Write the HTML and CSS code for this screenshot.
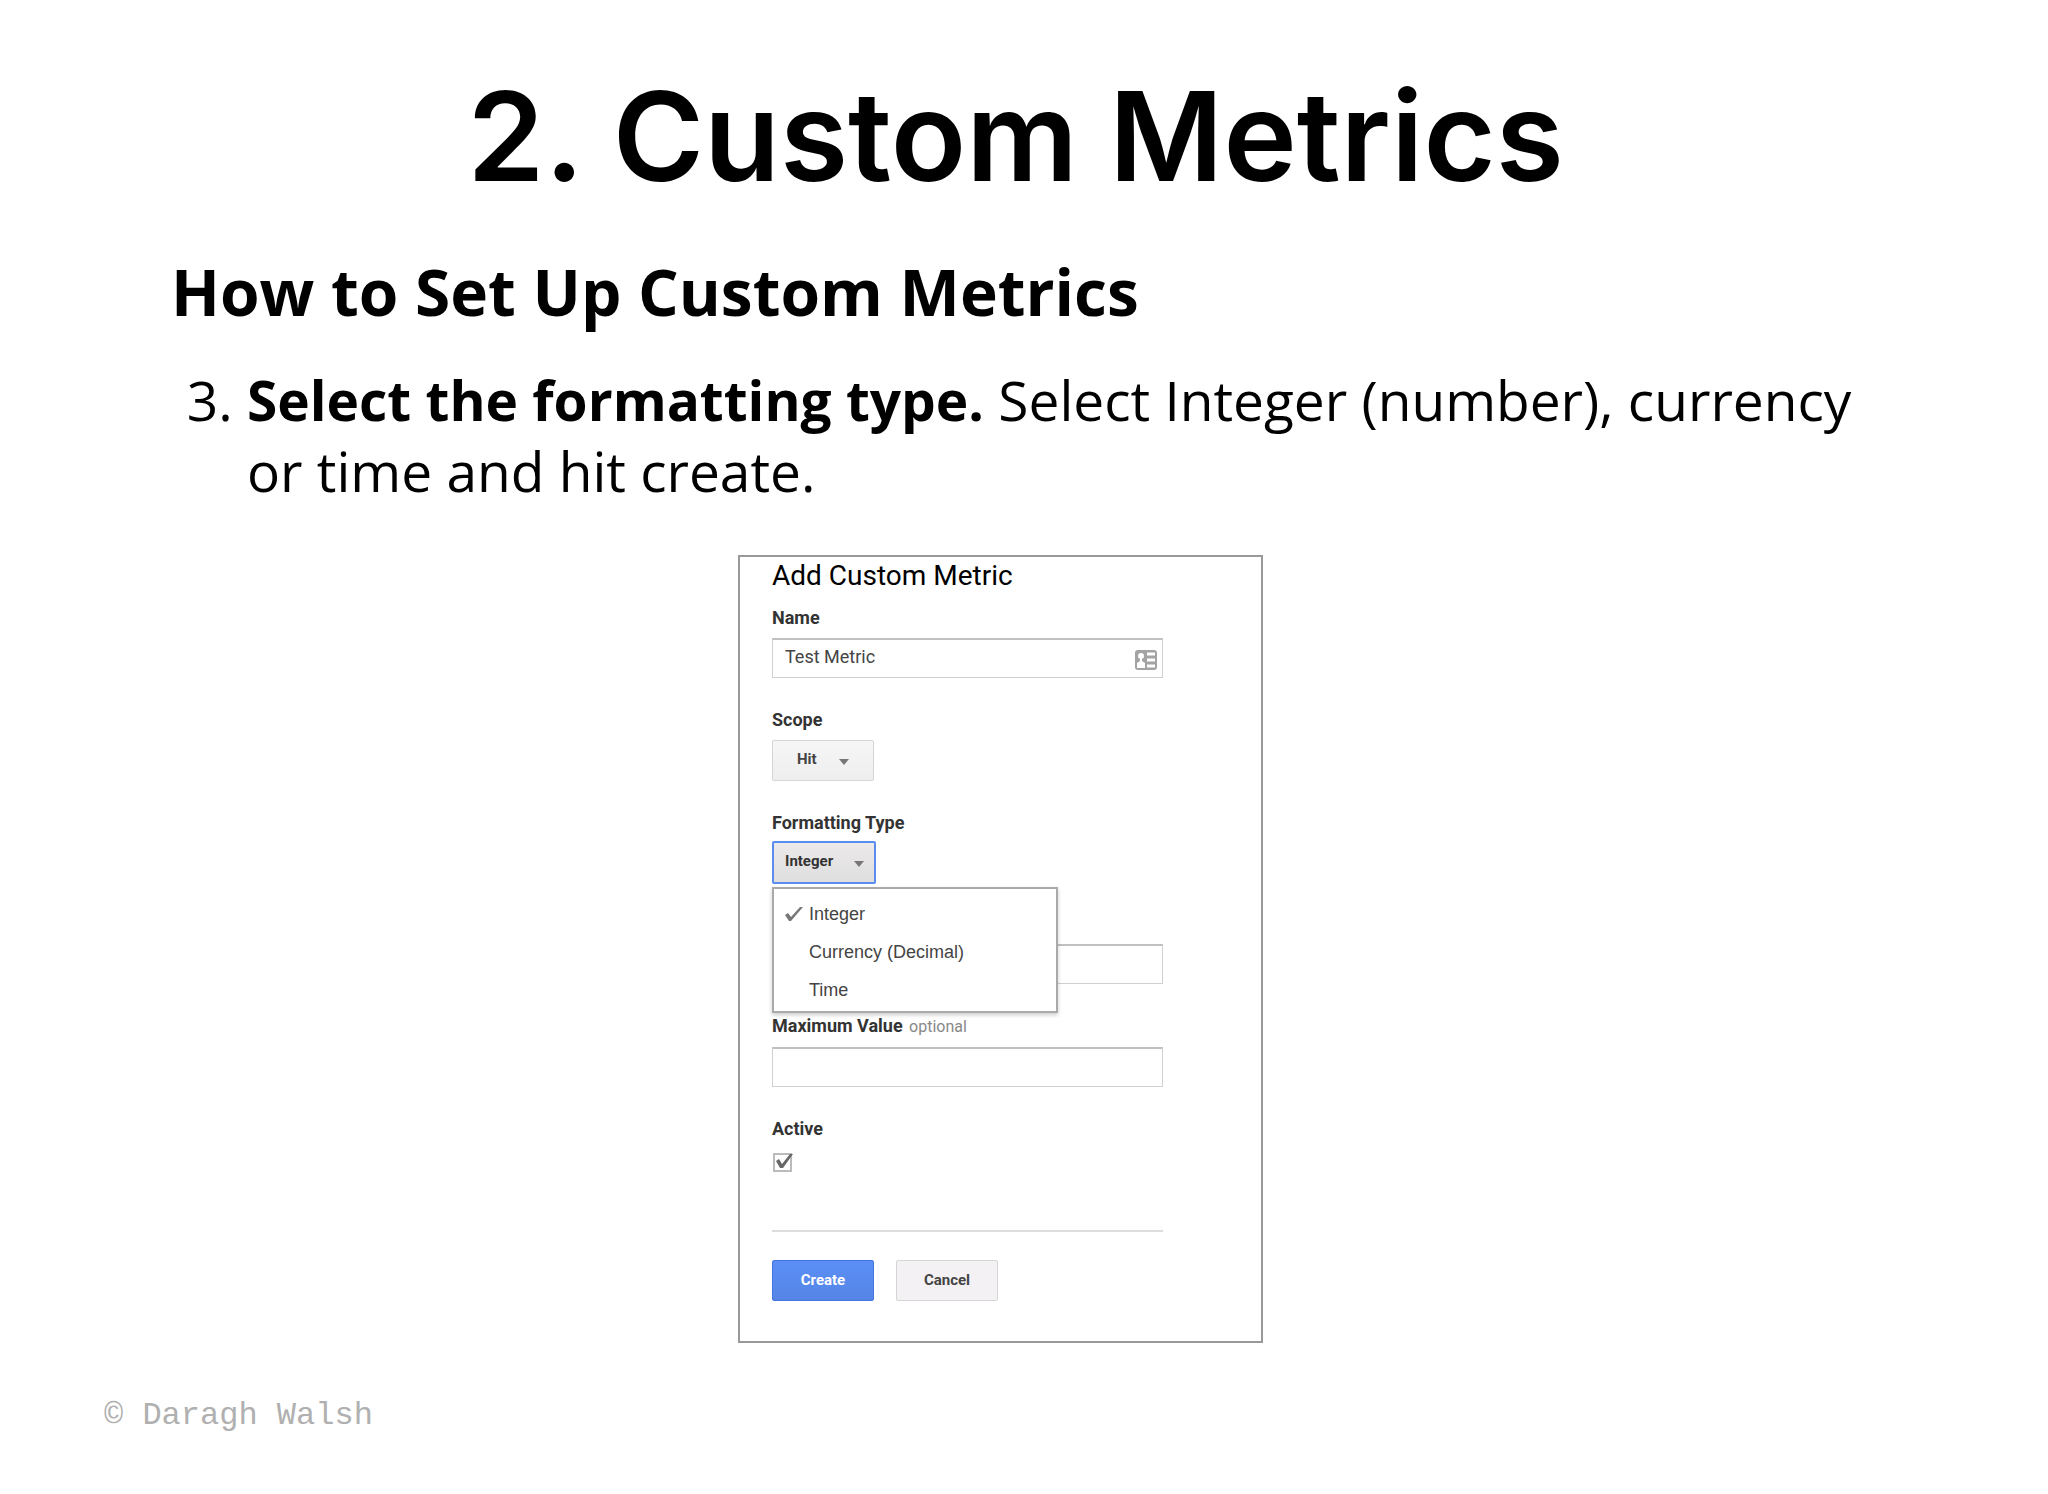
FILE: index.html
```html
<!DOCTYPE html>
<html lang="en">
<head>
    <meta charset="utf-8">
    <title>2. Custom Metrics</title>
    <link rel="stylesheet" href="styles.css">
</head>
<body>
    <main class="slide">
        <h1>2. Custom Metrics</h1>
        <h2>How to Set Up Custom Metrics</h2>
        <ol class="steps" start="3">
            <li><strong>Select the formatting type.</strong> Select Integer (number), currency or time and hit create.</li>
        </ol>

        <form class="metric-form">
            <h3>Add Custom Metric</h3>
            <div class="fields">
                <!-- Name -->
                <div class="field">
                    <label for="name">Name</label>
                    <div class="control">
                        <input type="text" class="text-input" id="name" value="Test Metric">
                        <svg class="card-icon" viewBox="0 0 22 20" width="22" height="20">
                            <rect x="0" y="0" width="22" height="20" rx="3" fill="#a3a3a3"/>
                            <circle cx="6" cy="6" r="3" fill="#fff"/>
                            <path d="M5 8h2v3l3 2v5H2v-5l3-2z" fill="#fff"/>
                            <path d="M12 4h8M12 10h8M12 16h8" stroke="#fff" stroke-width="3"/>
                        </svg>
                    </div>
                </div>

                <!-- Scope -->
                <div class="field">
                    <label for="scope">Scope</label>
                    <select class="dropdown scope" id="scope">
                        <option>Hit</option>
                        <option>Product</option>
                    </select>
                </div>

                <!-- Formatting type, menu open -->
                <div class="field field-open">
                    <label for="format">Formatting Type</label>
                    <div class="control">
                        <select class="dropdown format" id="format">
                            <option>Integer</option>
                            <option>Currency (Decimal)</option>
                            <option>Time</option>
                        </select>
                        <ul class="menu">
                            <li>
                                <svg class="tick" viewBox="0 0 18 16" width="18" height="16">
                                    <path d="M0 9l3-2 3 4L15 1l3 0L6 15 4 15z" fill="#777"/>
                                </svg>
                                Integer
                            </li>
                            <li>Currency (Decimal)</li>
                            <li>Time</li>
                        </ul>
                    </div>
                </div>

                <!-- Value limits -->
                <div class="field">
                    <label for="min" class="covered">Minimum Value</label>
                    <input type="text" class="text-input" id="min">
                </div>
                <div class="field">
                    <label for="max">Maximum Value <span class="optional">optional</span></label>
                    <input type="text" class="text-input" id="max">
                </div>

                <!-- Active -->
                <div class="field">
                    <label for="active">Active</label>
                    <input type="checkbox" class="checkbox" id="active" checked>
                </div>
            </div>

            <div class="actions">
                <button type="button" class="btn btn-primary">Create</button>
                <button type="button" class="btn">Cancel</button>
            </div>
        </form>
    </main>
    <footer>© Daragh Walsh</footer>
</body>
</html>
```
FILE: styles.css
```css
* {
    box-sizing: border-box;
}
body {
    margin: 0;
    background-color: #fff;
    color: #000;
    font-family: "Open Sans", sans-serif;
}
.slide {
    padding: 76px 188px 0 171px;
}
h1 {
    margin: 0 0 56px;
    font-family: Inter, sans-serif;
    font-size: 124px;
    font-weight: 600;
    line-height: 120px;
    text-align: center;
}
h2 {
    margin: 0 0 32px;
    font-size: 64px;
    font-weight: 700;
    line-height: 80px;
}
.steps {
    margin: 0 0 49px;
    padding-left: 76px;
    font-size: 55px;
    line-height: 71px;
}

/* Form panel */
.metric-form {
    width: 100%;
    max-width: 525px;
    margin: 0 auto;
    padding: 2px 98px 40px 32px;
    position: relative;
    right: 15px;
    border: 2px solid #999;
    color: #333;
    font-family: Roboto, sans-serif;
}
h3 {
    margin: 0 0 14px;
    color: #000;
    font-size: 28px;
    font-weight: 400;
    line-height: 34px;
}
.fields {
    display: flex;
    flex-direction: column;
    gap: 31px;
    padding-bottom: 57px;
    border-bottom: 2px solid #ddd;
}
.field {
    display: flex;
    flex-direction: column;
    align-items: flex-start;
    gap: 9px;
}
.field-open {
    gap: 7px;
}
label {
    font-size: 18px;
    font-weight: 700;
    line-height: 22px;
}
/* sits under the open menu */
.covered {
    visibility: hidden;
}
.optional {
    margin-left: 2px;
    color: #888;
    font-size: 16px;
    font-weight: 400;
}
.control {
    position: relative;
    width: 100%;
}
.text-input {
    display: block;
    width: 100%;
    height: 40px;
    padding: 0 40px 4px 12px;
    border: 1px solid #d0d0d0;
    border-top: 2px solid #c0c0c0;
    background-color: #fff;
    color: #444;
    font-family: inherit;
    font-size: 18px;
}
.card-icon {
    position: absolute;
    top: 12px;
    right: 6px;
}
.dropdown {
    display: block;
    appearance: none;
    width: 102px;
    height: 41px;
    padding: 0 0 4px 24px;
    border: 1px solid #d5d5d5;
    border-radius: 2px;
    background: url("data:image/svg+xml,%3Csvg xmlns='http://www.w3.org/2000/svg' width='10' height='6'%3E%3Cpath d='M0 0h10L5 6z' fill='%23777'/%3E%3C/svg%3E") no-repeat right 24px top 18px, linear-gradient(#f6f6f6, #eee);
    color: #444;
    font-family: inherit;
    font-size: 15px;
    font-weight: 700;
}
.format {
    width: 104px;
    height: 43px;
    margin-bottom: -2px;
    padding-left: 11px;
    border: 2px solid #5b8def;
    background-image: url("data:image/svg+xml,%3Csvg xmlns='http://www.w3.org/2000/svg' width='10' height='6'%3E%3Cpath d='M0 0h10L5 6z' fill='%23777'/%3E%3C/svg%3E"), linear-gradient(#ece9ea, #dfdfdf);
    background-position: right 10px top 18px, 0 0;
    color: #333;
}

/* Open menu */
.menu {
    position: absolute;
    top: 46px;
    left: 0;
    z-index: 1;
    width: 286px;
    margin: 0;
    padding: 6px 0 2px;
    border: 2px solid #aaa;
    background-color: #fff;
    box-shadow: 0 2px 4px rgba(0, 0, 0, 0.2);
    color: #444;
    font-family: "Liberation Sans", sans-serif;
    font-size: 18px;
    line-height: 38px;
    list-style: none;
}
.menu li {
    position: relative;
    padding-left: 35px;
}
.tick {
    position: absolute;
    top: 11px;
    left: 11px;
}
.checkbox {
    appearance: none;
    width: 24px;
    height: 24px;
    margin: 0;
    border: 1px solid #bbb;
}
.checkbox:checked {
    border: 0;
    background: url("data:image/svg+xml,%3Csvg xmlns='http://www.w3.org/2000/svg' width='24' height='24'%3E%3Crect x='2' y='5' width='17' height='17' fill='%23fff' stroke='%23bbb' stroke-width='2'/%3E%3Cpath d='M4 12l3-2 3 5L18 5l3 0L11 19 8 19z' fill='%23666'/%3E%3C/svg%3E") no-repeat;
}

/* Buttons */
.actions {
    display: flex;
    gap: 22px;
    margin-top: 28px;
}
.btn {
    width: 102px;
    height: 41px;
    padding: 0 0 2px;
    border: 1px solid #d5d5d5;
    border-radius: 2px;
    background-color: #f3f1f4;
    color: #444;
    font-family: inherit;
    font-size: 15px;
    font-weight: 700;
}
.btn-primary {
    border-color: #4374e0;
    background: linear-gradient(#5b8ff5, #5585e6);
    color: #fff;
}
footer {
    padding: 55px 104px;
    color: #b0b0b0;
    font-family: "Liberation Mono", monospace;
    font-size: 32px;
    line-height: 36px;
}
```
